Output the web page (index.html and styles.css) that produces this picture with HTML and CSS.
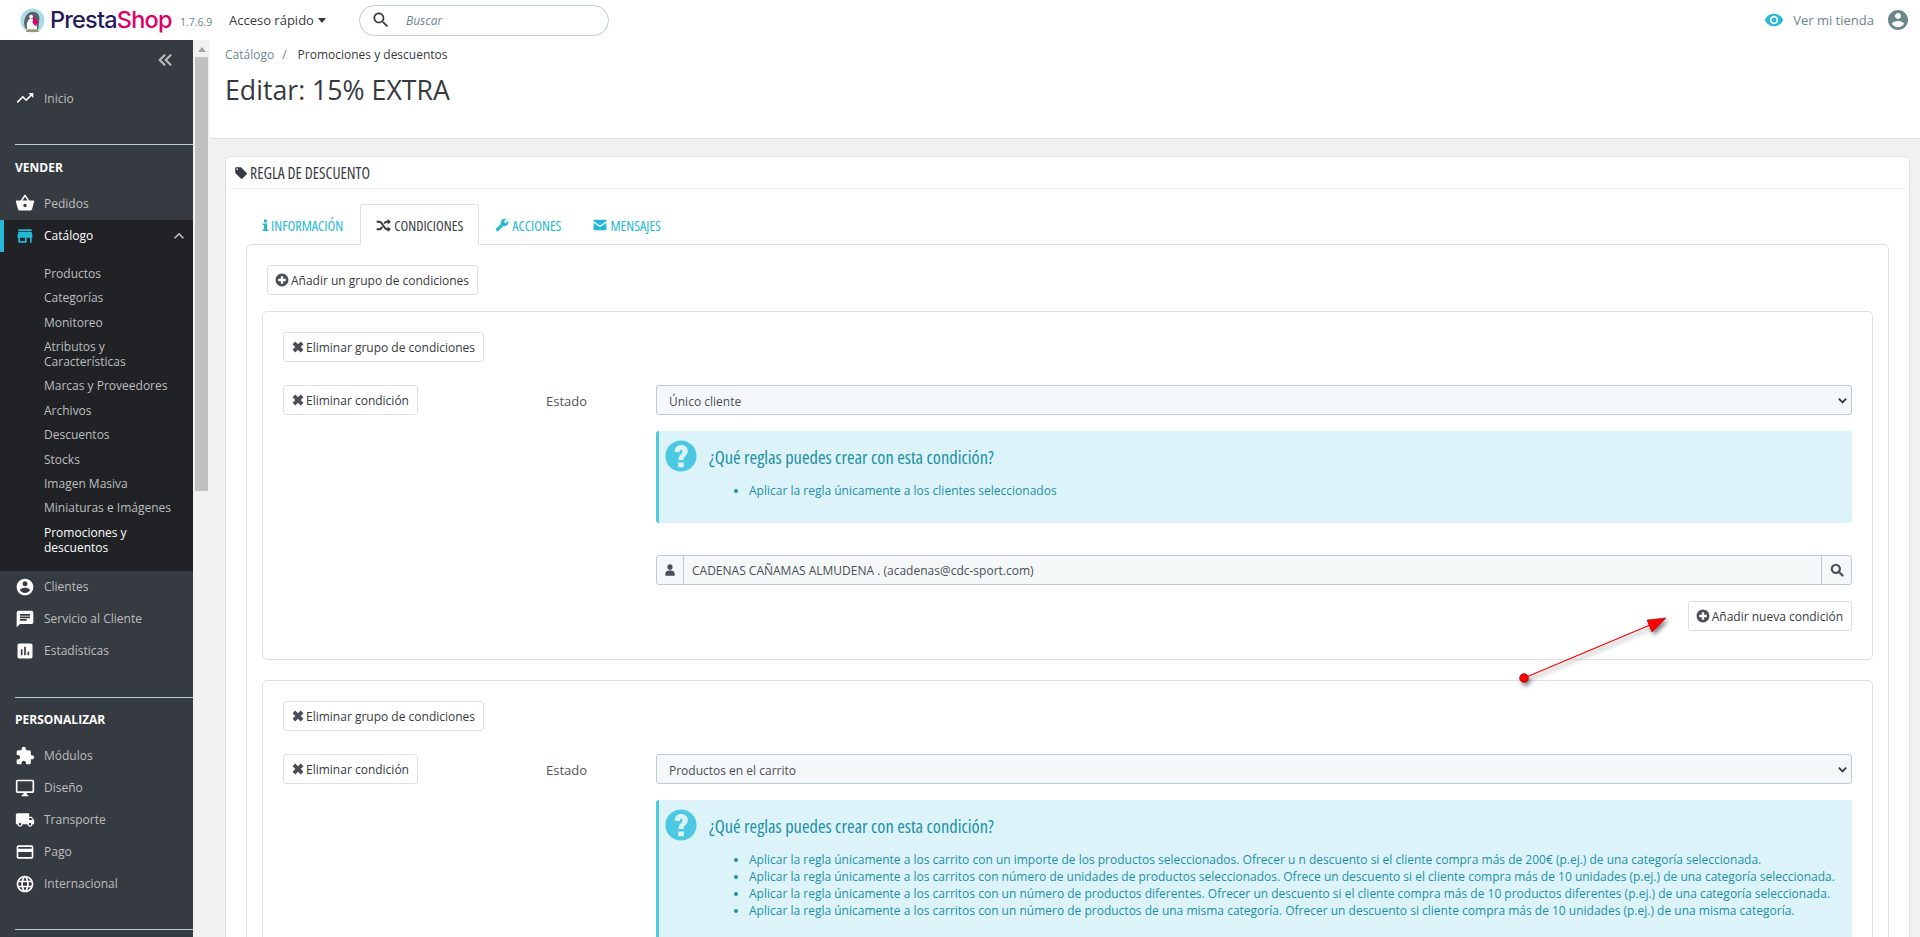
FILE: index.html
```html
<!DOCTYPE html>
<html lang="es">
<head>
<meta charset="utf-8">
<title>Editar: 15% EXTRA</title>
<link rel="stylesheet" href="styles.css">
</head>
<body>
<svg class="sprite" xmlns="http://www.w3.org/2000/svg">
<defs>
<symbol id="i-trend" viewBox="0 0 24 24"><path d="M16 6l2.29 2.29-4.88 4.88-4-4L2 16.59 3.41 18l6-6 4 4 6.3-6.29L22 12V6z"/></symbol>
<symbol id="i-basket" viewBox="0 0 24 24"><path d="M17.21 9l-4.38-6.56c-.19-.28-.51-.42-.83-.42-.32 0-.64.14-.83.43L6.79 9H2c-.55 0-1 .45-1 1 0 .09.01.18.04.27l2.54 9.27c.23.84 1 1.46 1.92 1.46h13c.92 0 1.69-.62 1.93-1.46l2.54-9.27L23 10c0-.55-.45-1-1-1h-4.79zM9 9l3-4.4L15 9H9zm3 8c-1.1 0-2-.9-2-2s.9-2 2-2 2 .9 2 2-.9 2-2 2z"/></symbol>
<symbol id="i-store" viewBox="0 0 24 24"><path d="M20 4H4v2h16V4zm1 10v-2l-1-5H4l-1 5v2h1v6h10v-6h4v6h2v-6h1zm-9 4H6v-4h6v4z"/></symbol>
<symbol id="i-account" viewBox="0 0 24 24"><path d="M12 2C6.48 2 2 6.48 2 12s4.48 10 10 10 10-4.48 10-10S17.52 2 12 2zm0 3c1.66 0 3 1.34 3 3s-1.34 3-3 3-3-1.34-3-3 1.34-3 3-3zm0 14.2c-2.5 0-4.71-1.28-6-3.22.03-1.99 4-3.08 6-3.08 1.99 0 5.97 1.09 6 3.08-1.29 1.94-3.5 3.22-6 3.22z"/></symbol>
<symbol id="i-chat" viewBox="0 0 24 24"><path d="M20 2H4c-1.1 0-1.99.9-1.99 2L2 22l4-4h14c1.1 0 2-.9 2-2V4c0-1.1-.9-2-2-2zM6 9h12v2H6V9zm8 5H6v-2h8v2zm4-6H6V6h12v2z"/></symbol>
<symbol id="i-stats" viewBox="0 0 24 24"><path d="M19 3H5c-1.1 0-2 .9-2 2v14c0 1.1.9 2 2 2h14c1.1 0 2-.9 2-2V5c0-1.1-.9-2-2-2zM9 17H7v-7h2v7zm4 0h-2V7h2v10zm4 0h-2v-4h2v4z"/></symbol>
<symbol id="i-puzzle" viewBox="0 0 24 24"><path d="M20.5 11H19V7c0-1.1-.9-2-2-2h-4V3.5C13 2.12 11.88 1 10.5 1S8 2.12 8 3.5V5H4c-1.1 0-1.99.9-1.99 2v3.8H3.5c1.49 0 2.7 1.21 2.7 2.7s-1.21 2.7-2.7 2.7H2V20c0 1.1.9 2 2 2h3.8v-1.5c0-1.49 1.21-2.7 2.7-2.7 1.49 0 2.7 1.21 2.7 2.7V22H17c1.1 0 2-.9 2-2v-4h1.5c1.38 0 2.5-1.12 2.5-2.5S21.88 11 20.5 11z"/></symbol>
<symbol id="i-desktop" viewBox="0 0 24 24"><path d="M21 2H3c-1.1 0-2 .9-2 2v12c0 1.1.9 2 2 2h7v2H8v2h8v-2h-2v-2h7c1.1 0 2-.9 2-2V4c0-1.1-.9-2-2-2zm0 14H3V4h18v12z"/></symbol>
<symbol id="i-truck" viewBox="0 0 24 24"><path d="M20 8h-3V4H3c-1.1 0-2 .9-2 2v11h2c0 1.66 1.34 3 3 3s3-1.34 3-3h6c0 1.66 1.34 3 3 3s3-1.34 3-3h2v-5l-3-4zM6 18.5c-.83 0-1.5-.67-1.5-1.5s.67-1.5 1.5-1.5 1.5.67 1.5 1.5-.67 1.5-1.5 1.5zm13.5-9l1.96 2.5H17V9.5h2.5zm-1.5 9c-.83 0-1.5-.67-1.5-1.5s.67-1.5 1.5-1.5 1.5.67 1.5 1.5-.67 1.5-1.5 1.5z"/></symbol>
<symbol id="i-card" viewBox="0 0 24 24"><path d="M20 4H4c-1.11 0-1.99.89-1.99 2L2 18c0 1.11.89 2 2 2h16c1.11 0 2-.89 2-2V6c0-1.11-.89-2-2-2zm0 14H4v-6h16v6zm0-10H4V6h16v2z"/></symbol>
<symbol id="i-globe" viewBox="0 0 24 24"><path d="M11.99 2C6.47 2 2 6.48 2 12s4.47 10 9.99 10C17.52 22 22 17.52 22 12S17.52 2 11.99 2zm6.93 6h-2.95c-.32-1.25-.78-2.45-1.38-3.56 1.84.63 3.37 1.91 4.33 3.56zM12 4.04c.83 1.2 1.48 2.53 1.91 3.96h-3.82c.43-1.43 1.08-2.76 1.91-3.96zM4.26 14C4.1 13.36 4 12.69 4 12s.1-1.36.26-2h3.38c-.08.66-.14 1.32-.14 2 0 .68.06 1.34.14 2H4.26zm.82 2h2.95c.32 1.25.78 2.45 1.38 3.56-1.84-.63-3.37-1.9-4.33-3.56zm2.95-8H5.08c.96-1.66 2.49-2.93 4.33-3.56C8.81 5.55 8.35 6.75 8.03 8zM12 19.96c-.83-1.2-1.48-2.53-1.91-3.96h3.82c-.43 1.43-1.08 2.76-1.91 3.96zM14.34 14H9.66c-.09-.66-.16-1.32-.16-2 0-.68.07-1.35.16-2h4.68c.09.65.16 1.32.16 2 0 .68-.07 1.34-.16 2zm.25 5.56c.6-1.11 1.06-2.31 1.38-3.56h2.95c-.96 1.65-2.49 2.93-4.33 3.56zM16.36 14c.08-.66.14-1.32.14-2 0-.68-.06-1.34-.14-2h3.38c.16.64.26 1.31.26 2s-.1 1.36-.26 2h-3.38z"/></symbol>
<symbol id="i-eye" viewBox="0 0 24 24"><path d="M12 4.5C7 4.5 2.73 7.61 1 12c1.73 4.39 6 7.5 11 7.5s9.27-3.11 11-7.5c-1.73-4.39-6-7.5-11-7.5zM12 17c-2.76 0-5-2.24-5-5s2.24-5 5-5 5 2.24 5 5-2.24 5-5 5zm0-8c-1.66 0-3 1.34-3 3s1.34 3 3 3 3-1.34 3-3-1.34-3-3-3z"/></symbol>
<symbol id="i-search" viewBox="0 0 24 24"><path d="M15.5 14h-.79l-.28-.27C15.41 12.59 16 11.11 16 9.5 16 5.91 13.09 3 9.5 3S3 5.91 3 9.5 5.91 16 9.5 16c1.61 0 3.09-.59 4.23-1.57l.27.28v.79l5 4.99L20.49 19l-4.99-5zm-6 0C7.01 14 5 11.99 5 9.5S7.01 5 9.5 5 14 7.01 14 9.5 11.99 14 9.5 14z"/></symbol>
<symbol id="i-fasearch" viewBox="0 0 24 24"><circle cx="10" cy="10" r="7" fill="none" stroke="currentColor" stroke-width="3.600"/><path d="M15 15l6.500 6.500" fill="none" stroke="currentColor" stroke-width="4" stroke-linecap="round"/></symbol>
<symbol id="i-shuffle" viewBox="0 0 24 24"><path d="M1 6h4.500c5 0 7 12 12 12H20M1 18h4.500c2 0 3.500-2 4.500-4M13 9c1-1.600 2.500-3 4.500-3H20" fill="none" stroke="currentColor" stroke-width="3"/><path d="M18.500 1.500L24 6l-5.500 4.500zM18.500 13.500L24 18l-5.500 4.500z"/></symbol>
<symbol id="i-wrench" viewBox="0 0 24 24"><path d="M22.7 19l-9.1-9.1c.9-2.3.4-5-1.5-6.9-2-2-5-2.4-7.4-1.3L9 6 6 9 1.6 4.7C.4 7.1.9 10.1 2.9 12.1c1.9 1.9 4.6 2.4 6.9 1.5l9.1 9.1c.4.4 1 .4 1.4 0l2.3-2.3c.5-.4.5-1.1.1-1.4z" transform="matrix(-1 0 0 1 24 0)"/></symbol>
<symbol id="i-mail" viewBox="0 0 24 24"><path d="M2 3h20c.6 0 1 .4 1 1v1.500L12 13 1 5.500V4c0-.6.4-1 1-1zM1 8l11 7.500L23 8v12c0 .6-.4 1-1 1H2c-.6 0-1-.4-1-1z"/></symbol>
<symbol id="i-tag" viewBox="0 0 24 24"><path d="M21.41 11.58l-9-9C12.05 2.22 11.55 2 11 2H4c-1.1 0-2 .9-2 2v7c0 .55.22 1.05.59 1.42l9 9c.36.36.86.58 1.41.58.55 0 1.05-.22 1.41-.59l7-7c.37-.36.59-.86.59-1.41 0-.55-.23-1.06-.59-1.42zM5.5 7C4.67 7 4 6.33 4 5.5S4.67 4 5.5 4 7 4.67 7 5.5 6.33 7 5.5 7z"/></symbol>
<symbol id="i-add" viewBox="0 0 24 24"><path d="M12 1C5.930 1 1 5.930 1 12s4.930 11 11 11 11-4.930 11-11S18.070 1 12 1zm6.500 13h-4.500v4.500h-4V14H5.500v-4H10V5.500h4V10h4.500z"/></symbol>
<symbol id="i-help" viewBox="0 0 24 24"><path fill-rule="evenodd" d="M12 1C5.900 1 1 5.900 1 12s4.900 11 11 11 11-4.900 11-11S18.100 1 12 1zm-2 15.500h4V20h-4zM7.500 9C7.500 6.200 9.600 4.300 12.200 4.300c2.600 0 4.600 1.800 4.600 4.100 0 3.300-3 3.300-3 6.400h-3.600c0-3.900 2.900-4.100 2.900-6 0-.7-.4-1.300-1-1.300-.7 0-1.100.6-1.100 1.900z"/></symbol>
<symbol id="i-user" viewBox="0 0 24 24"><path d="M12 12c2.760 0 4.500-2.240 4.500-5S14.760 2 12 2 7.500 4.240 7.500 7s1.740 5 4.500 5zm0 1c-3.500 0-8 1-8 6v3h16v-3c0-5-4.500-6-8-6z"/></symbol>
<symbol id="i-x" viewBox="0 0 24 24"><path d="M5 5l14 14M19 5L5 19" fill="none" stroke="currentColor" stroke-width="6.500"/></symbol>
<symbol id="i-info" viewBox="5 0 14 24"><path d="M9 1h6v6H9zM6 9h9v12h3v3H6v-3h3v-9H6z"/></symbol>
<symbol id="i-chev" viewBox="0 0 24 24"><path d="M7.410 15.410L12 10.830l4.590 4.580L18 14l-6-6-6 6z"/></symbol>
<symbol id="i-down" viewBox="0 0 24 24"><path d="M4 8l8 8 8-8" fill="none" stroke="currentColor" stroke-width="4"/></symbol>
<symbol id="i-dbl" viewBox="0 0 24 24"><path d="M12 5l-7 7 7 7M20 5l-7 7 7 7" fill="none" stroke="currentColor" stroke-width="2.800"/></symbol>
</defs>
</svg>

<div class="app">
  <header class="topbar">
    <a class="logo">
      <svg class="logo-mark" viewBox="0 0 26 26" aria-hidden="true">
        <circle cx="13" cy="13" r="12.500" fill="#a9dce6"/>
        <path d="M5 20C3 12 6 5 13 4c5 0 8 3 7 9l-1 9H7z" fill="#5d5f68"/>
        <path d="M8 23c-2-5-1-10 3-12 3 0 5 3 6 6l1 6z" fill="#fff"/>
        <circle cx="11.500" cy="9" r="2" fill="#fff"/>
        <path d="M14 9l5 5-3 5-3-4z" fill="#df0067"/>
        <path d="M6 25h14l-2-3H8z" fill="#9a9878"/>
      </svg>
      <span class="logo-text">Presta<span class="logo-shop">Shop</span></span>
    </a>
    <span class="version">1.7.6.9</span>
    <span class="quick">Acceso rápido<i class="caret"></i></span>
    <div class="search">
      <svg class="icon search-icon"><use href="#i-search"/></svg>
      <span class="search-ph">Buscar</span>
    </div>
    <div class="top-right">
      <svg class="icon eye"><use href="#i-eye"/></svg>
      <span class="shop-link">Ver mi tienda</span>
      <svg class="icon avatar"><use href="#i-account"/></svg>
    </div>
  </header>

  <div class="body">
    <nav class="side">
      <div class="collapse"><svg class="icon dbl"><use href="#i-dbl"/></svg></div>
      <a class="nav nav-home"><svg class="icon"><use href="#i-trend"/></svg>Inicio</a>

      <div class="sect">VENDER</div>
      <a class="nav"><svg class="icon"><use href="#i-basket"/></svg>Pedidos</a>
      <a class="nav nav-active"><svg class="icon icon-blue"><use href="#i-store"/></svg>Catálogo<svg class="icon chev"><use href="#i-chev"/></svg></a>
      <ul class="sub">
        <li>Productos</li>
        <li>Categorías</li>
        <li>Monitoreo</li>
        <li>Atributos y Características</li>
        <li>Marcas y Proveedores</li>
        <li>Archivos</li>
        <li>Descuentos</li>
        <li>Stocks</li>
        <li>Imagen Masiva</li>
        <li>Miniaturas e Imágenes</li>
        <li class="sub-on">Promociones y descuentos</li>
      </ul>
      <a class="nav"><svg class="icon"><use href="#i-account"/></svg>Clientes</a>
      <a class="nav"><svg class="icon"><use href="#i-chat"/></svg>Servicio al Cliente</a>
      <a class="nav"><svg class="icon"><use href="#i-stats"/></svg>Estadísticas</a>

      <div class="sect sect-2">PERSONALIZAR</div>
      <a class="nav"><svg class="icon"><use href="#i-puzzle"/></svg>Módulos</a>
      <a class="nav"><svg class="icon"><use href="#i-desktop"/></svg>Diseño</a>
      <a class="nav"><svg class="icon"><use href="#i-truck"/></svg>Transporte</a>
      <a class="nav"><svg class="icon"><use href="#i-card"/></svg>Pago</a>
      <a class="nav"><svg class="icon"><use href="#i-globe"/></svg>Internacional</a>
      <div class="sect sect-3"></div>
    </nav>
    <div class="scrollbar"><i class="scroll-up"></i><i class="scroll-thumb"></i></div>

    <main class="main">
      <div class="page-head">
        <div class="crumbs"><span class="crumb-a">Catálogo</span><span class="crumb-sep">/</span><span>Promociones y descuentos</span></div>
        <h1 class="title">Editar: 15% EXTRA</h1>
      </div>

      <section class="panel">
        <div class="panel-head"><svg class="icon ph-icon"><use href="#i-tag"/></svg>REGLA DE DESCUENTO</div>
        <div class="tabs">
          <a class="tab tab-first"><svg class="icon info-i"><use href="#i-info"/></svg>INFORMACIÓN</a>
          <a class="tab tab-on"><svg class="icon"><use href="#i-shuffle"/></svg>CONDICIONES</a>
          <a class="tab"><svg class="icon"><use href="#i-wrench"/></svg>ACCIONES</a>
          <a class="tab"><svg class="icon"><use href="#i-mail"/></svg>MENSAJES</a>
        </div>
        <div class="tab-body">
          <button class="btn btn-add-group"><svg class="icon"><use href="#i-add"/></svg>Añadir un grupo de condiciones</button>

          <div class="group">
            <button class="btn"><svg class="icon x"><use href="#i-x"/></svg>Eliminar grupo de condiciones</button>
            <div class="cond">
              <button class="btn"><svg class="icon x"><use href="#i-x"/></svg>Eliminar condición</button>
              <label class="cond-label">Estado</label>
              <div class="cond-main">
                <div class="select">Único cliente<svg class="icon sel-chev"><use href="#i-down"/></svg></div>
                <div class="info">
                  <div class="info-head"><svg class="icon info-icon"><use href="#i-help"/></svg><h4 class="info-title">¿Qué reglas puedes crear con esta condición?</h4></div>
                  <ul class="info-list">
                    <li>Aplicar la regla únicamente a los clientes seleccionados</li>
                  </ul>
                </div>
                <div class="igroup">
                  <span class="addon addon-l"><svg class="icon"><use href="#i-user"/></svg></span>
                  <span class="ivalue">CADENAS CAÑAMAS ALMUDENA . (acadenas@cdc-sport.com)</span>
                  <span class="addon addon-r"><svg class="icon"><use href="#i-fasearch"/></svg></span>
                </div>
                <div class="row-end"><button class="btn"><svg class="icon"><use href="#i-add"/></svg>Añadir nueva condición</button></div>
              </div>
            </div>
          </div>

          <div class="group">
            <button class="btn"><svg class="icon x"><use href="#i-x"/></svg>Eliminar grupo de condiciones</button>
            <div class="cond">
              <button class="btn"><svg class="icon x"><use href="#i-x"/></svg>Eliminar condición</button>
              <label class="cond-label">Estado</label>
              <div class="cond-main">
                <div class="select">Productos en el carrito<svg class="icon sel-chev"><use href="#i-down"/></svg></div>
                <div class="info">
                  <div class="info-head"><svg class="icon info-icon"><use href="#i-help"/></svg><h4 class="info-title">¿Qué reglas puedes crear con esta condición?</h4></div>
                  <ul class="info-list">
                    <li>Aplicar la regla únicamente a los carrito con un importe de los productos seleccionados. Ofrecer u n descuento si el cliente compra más de 200€ (p.ej.) de una categoría seleccionada.</li>
                    <li>Aplicar la regla únicamente a los carritos con número de unidades de productos seleccionados. Ofrece un descuento si el cliente compra más de 10 unidades (p.ej.) de una categoría seleccionada.</li>
                    <li>Aplicar la regla únicamente a los carritos con un número de productos diferentes. Ofrecer un descuento si el cliente compra más de 10 productos diferentes (p.ej.) de una categoría seleccionada.</li>
                    <li>Aplicar la regla únicamente a los carritos con un número de productos de una misma categoría. Ofrecer un descuento si cliente compra más de 10 unidades (p.ej.) de una misma categoría.</li>
                  </ul>
                </div>
              </div>
            </div>
          </div>
        </div>
      </section>
    </main>
  </div>

  <svg class="arrow" viewBox="0 0 1920 937" aria-hidden="true">
    <defs><filter id="sh" x="-20%" y="-20%" width="140%" height="140%"><feDropShadow dx="2" dy="3" stdDeviation="2" flood-color="#000" flood-opacity=".5"/></filter></defs>
    <g filter="url(#sh)">
      <line x1="1524" y1="678" x2="1650" y2="625" stroke="#f00" stroke-width="1.200"/>
      <path d="M1666 618L1647 620L1652 632Z" fill="#f00" stroke="#a00000" stroke-width=".6"/>
      <circle cx="1524" cy="678" r="4.300" fill="#f00" stroke="#900" stroke-width=".8"/>
    </g>
  </svg>
</div>
</body>
</html>
```

FILE: styles.css
```css
* { box-sizing: border-box; }
html, body { margin: 0; height: 100%; overflow: hidden; }
body { font-family: "Open Sans", sans-serif; font-size: 12px; color: #363a41; background: #eff1f2; }
.sprite { display: none; }
.icon { width: 14px; height: 14px; fill: currentColor; flex: none; }
.app { position: relative; height: 937px; display: flex; flex-direction: column; overflow: hidden; }

/* top bar */
.topbar { height: 40px; background: #fff; display: flex; align-items: center; padding-left: 20px; flex: none; }
.logo { display: flex; align-items: center; gap: 5px; width: 160px; }
.logo-mark { width: 25px; height: 25px; flex: none; }
.logo-text { font-family: "Inter", "Open Sans", sans-serif; font-size: 23.500px; font-weight: 500; letter-spacing: -.8px; color: #251b5b; line-height: 1; }
.logo-shop { color: #df0067; }
.version { font-size: 10.500px; color: #6c868e; width: 49px; margin-top: 3px; }
.quick { font-size: 13px; color: #363a41; width: 130px; display: flex; align-items: center; }
.caret { width: 0; height: 0; border: 4.500px solid transparent; border-top: 5px solid #363a41; border-bottom: 0; margin-left: 4px; }
.search { width: 250px; height: 31px; border: 1px solid #bbcdd2; border-radius: 16px; display: flex; align-items: center; padding-left: 11px; }
.search-icon { width: 20px; height: 20px; color: #363a41; }
.search-ph { font-style: italic; font-size: 12px; color: #6c868e; margin-left: 15px; }
.top-right { margin-left: auto; display: flex; align-items: center; padding-right: 10px; }
.eye { width: 20px; height: 20px; color: #25b9d7; }
.shop-link { font-size: 13px; color: #6c868e; margin: 0 12px 0 9px; }
.avatar { width: 24px; height: 24px; color: #6c868e; }

/* layout */
.body { flex: 1; display: flex; min-height: 0; }
.side { width: 193px; flex: none; background: #363a41; color: #bebebe; font-size: 12px; }
.scrollbar { width: 17px; flex: none; background: #f1f1f1; display: flex; flex-direction: column; align-items: center; }
.scroll-up { width: 0; height: 0; margin: 7px 0 5px; border: 4px solid transparent; border-bottom: 5px solid #a3a3a3; border-top: 0; }
.scroll-thumb { width: 13px; height: 434px; background: #c1c1c1; }
.main { flex: 1; min-width: 0; }

/* sidebar */
.collapse { height: 40px; display: flex; justify-content: flex-end; align-items: center; padding-right: 19px; color: #bebebe; }
.dbl { width: 18px; height: 18px; }
.nav { height: 32px; display: flex; align-items: center; color: #bebebe; padding-left: 15px; position: relative; }
.nav .icon { width: 20px; height: 20px; color: #fff; margin-right: 9px; }
.nav-home { margin-top: 2px; }
.nav-active { background: #202226; color: #fff; margin-top: 1px; padding-bottom: 1px; }
.nav-active::before { content: ""; position: absolute; left: 0; top: 0; bottom: 0; width: 4px; background: #25b9d7; }
.nav-active .icon-blue { color: #25b9d7; }
.nav-active .chev { position: absolute; right: 4px; top: 6px; color: #bebebe; margin: 0; }
.sect { margin: 30px 0 0 15px; border-top: 1px solid #bbcdd2; padding: 15px 0 0; height: 43px; font-weight: 700; font-size: 12px; color: #fff; line-height: 16px; }
.sect-2 { padding-top: 14px; }
.sect-3 { margin-top: 29px; }
.sub { list-style: none; margin: 0; padding: 9.200px 12px 11.300px 44px; background: #202226; }
.sub li { padding: 4.700px 0; line-height: 15px; }
.sub .sub-on { color: #fff; }

/* page head */
.page-head { height: 99px; background: #fff; border-bottom: 1px solid #dfdfdf; padding: 6px 15px 0; }
.crumbs { font-size: 12px; line-height: 17px; color: #363a41; }
.crumb-a { color: #6c868e; }
.crumb-sep { color: #6c868e; margin: 0 11px 0 8px; }
.title { font-size: 26.700px; font-weight: 400; line-height: 37px; margin: 8px 0 0; color: #363a41; }

/* panel */
.panel { margin: 17px 10px 0 15px; background: #fff; border: 1px solid #dbe0e2; border-radius: 5px; padding: 0 20px; height: 800px; }
.panel-head { height: 32px; margin: 0 -16px; padding-left: 4px; border-bottom: 1px solid #eee; display: flex; align-items: center; font-family: "Open Sans", sans-serif; font-stretch: 75%; font-size: 15.700px; color: #363a41; }
.ph-icon { width: 14px; height: 14px; margin-right: 2px; }
.tabs { display: flex; margin-top: 15px; height: 41px; position: relative; z-index: 1; }
.tab { display: flex; align-items: center; gap: 3px; padding: 0 15px; font-family: "Open Sans", sans-serif; font-stretch: 75%; font-size: 14.200px; color: #25b9d7; border: 1px solid transparent; border-bottom: 0; border-radius: 3px 3px 0 0; }
.tab-first { padding-right: 16px; gap: 2px; }
.tab-on { background: #fff; color: #363a41; border-color: #dbe0e2; height: 41px; }
.tab-on .icon { width: 15px; height: 15px; }
.tab .info-i { width: 7px; height: 12px; }
.tab-body { border: 1px solid #dbe0e2; border-radius: 5px; margin-top: -1px; padding: 20px 15px 20px 20px; height: 700px; }
.btn { display: inline-flex; align-items: center; height: 30px; padding: 0 8px 0 7px; background: #fff; border: 1px solid #dbe0e2; border-radius: 3px; font: inherit; color: #363a41; font-size: 12px; gap: 2px; white-space: nowrap; }
.btn .icon { width: 14px; height: 14px; color: #4a4e56; }
.btn .x { margin-right: -1px; }
.group { border: 1px solid #dbe0e2; border-radius: 5px; padding: 20px 20px 28px; margin: 16px 0 0 -5px; }
.group + .group { margin-top: 20px; }
.cond { margin-top: 23px; display: flex; align-items: flex-start; }
.cond .btn { flex: none; }
.cond-label { width: 238px; flex: none; padding: 8px 0 0 128px; font-size: 13px; line-height: 17px; color: #555; }
.cond > .btn { width: 135px; }
.cond-main { flex: 1; min-width: 0; }
.select { height: 30px; background: #f5f8f9; border: 1px solid #bbcdd2; border-radius: 3px; padding: 2px 3px 0 12px; display: flex; align-items: center; justify-content: space-between; font-size: 12px; color: #4a4e56; }
.sel-chev { width: 11px; height: 11px; color: #363a41; margin-top: -2px; }
.info { margin-top: 16px; background: #dcf4f9; border-left: 3px solid #4bc8e2; border-radius: 3px; padding: 8px 0 24px 5px; color: #1c8fa6; }
.info-head { display: flex; align-items: center; }
.info-icon { width: 34px; height: 34px; color: #4bc8e2; }
.info-title { margin: 0 0 0 11px; font-family: "Open Sans", sans-serif; font-stretch: 75%; font-weight: 400; font-size: 18.400px; color: #1c8fa6; }
.info-list { margin: 9px 0 0; padding: 0 0 0 85px; font-size: 12px; line-height: 17px; }
.igroup { margin-top: 32px; height: 30px; display: flex; background: #f5f8f9; border: 1px solid #bbcdd2; border-radius: 3px; align-items: stretch; }
.addon { display: flex; align-items: center; justify-content: center; flex: none; }
.addon-l { width: 27px; border-right: 1px solid #bbcdd2; }
.addon-r { width: 30px; border-left: 1px solid #bbcdd2; }
.addon .icon { width: 14px; height: 14px; color: #4a4e56; }
.ivalue { flex: 1; font-size: 12px; line-height: 30px; padding-left: 8px; color: #4a4e56; }
.row-end { display: flex; justify-content: flex-end; margin-top: 16px; }

.arrow { position: absolute; inset: 0; width: 1920px; height: 937px; pointer-events: none; }
```
